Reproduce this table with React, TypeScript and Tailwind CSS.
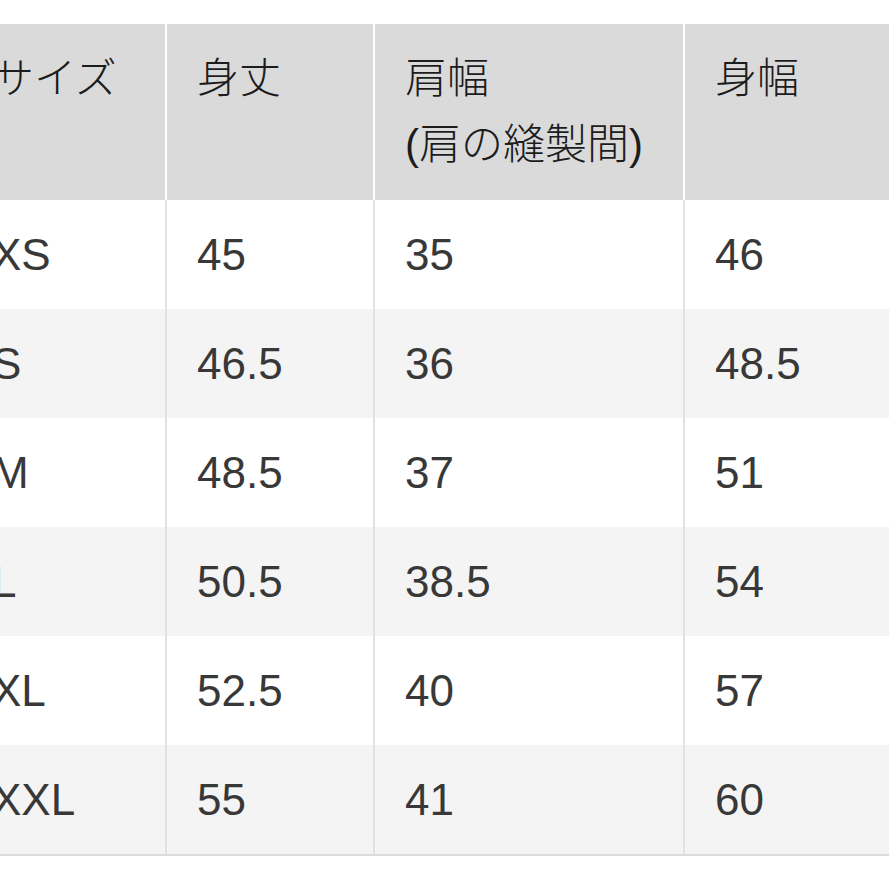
const headers = ["サイズ", "身丈", "肩幅\n(肩の縫製間)", "身幅"];

const rows = [
  ["XS", "45", "35", "46"],
  ["S", "46.5", "36", "48.5"],
  ["M", "48.5", "37", "51"],
  ["L", "50.5", "38.5", "54"],
  ["XL", "52.5", "40", "57"],
  ["XXL", "55", "41", "60"],
];

const widths = ["w-[205px]", "w-[208px]", "w-[310px]", "w-[310px]"];

export default function App() {
  return (
    <div className="w-[889px] h-[889px] overflow-hidden bg-white pt-[24px] font-['Liberation_Sans','Noto_Sans_CJK_JP',sans-serif]">
      <table className="ml-[-38px] table-fixed border-separate border-spacing-0 w-[1033px] border-b-2 border-[#dcdcdc]">
        <thead>
          <tr className="bg-[#dadada]">
            {headers.map((h, i) => (
              <th
                key={h}
                className={`${widths[i]} border-r-2 border-white pl-[30px] pr-2 pt-[22px] pb-[22px] h-[176px] align-top text-left font-light text-[42px] leading-[66px] text-[#1c1c1c] whitespace-pre-line`}
              >
                {h}
              </th>
            ))}
          </tr>
        </thead>
        <tbody>
          {rows.map((r, ri) => (
            <tr key={r[0]} className={ri % 2 === 1 ? "bg-[#f4f4f4]" : "bg-white"}>
              {r.map((c, ci) => (
                <td
                  key={ci}
                  className="border-r-2 border-[#e2e2e2] pl-[30px] pr-2 h-[109px] align-middle text-[44px] leading-[66px] text-[#383838]"
                >
                  {c}
                </td>
              ))}
            </tr>
          ))}
        </tbody>
      </table>
    </div>
  );
}
